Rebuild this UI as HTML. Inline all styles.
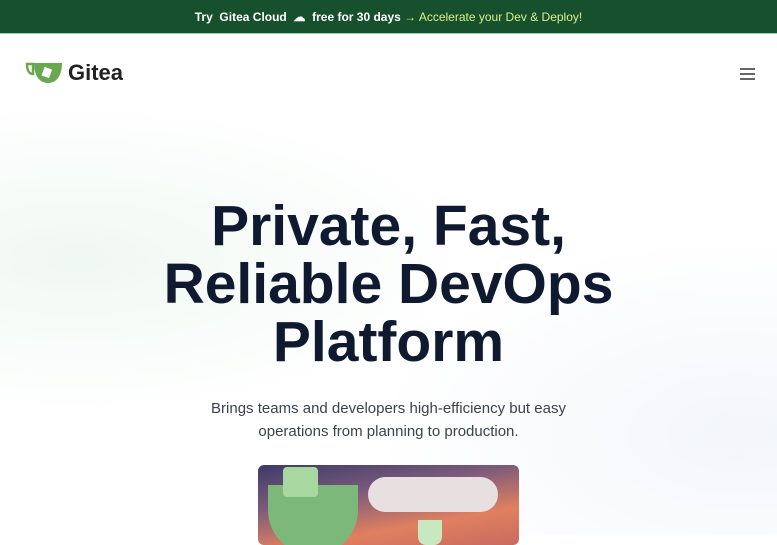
<!DOCTYPE html><html><head><style>
body{margin:0;width:777px;height:534px;overflow:hidden;font-family:"Liberation Sans",sans-serif;background:#fff;position:relative}
.bar{height:34px;background:#17502c;color:#fff;font-size:12px;font-weight:bold;text-align:center;line-height:34px;border-bottom:1px solid #9fd2b0;box-sizing:border-box}
.bar span{color:#d9f08a;font-weight:normal}
.bg{position:absolute;top:34px;left:0;right:0;bottom:0;background:radial-gradient(ellipse at 10% 45%,#f0f8f3 0,rgba(255,255,255,0) 40%),radial-gradient(ellipse at 95% 80%,#f3f6fa 0,rgba(255,255,255,0) 35%),#fff}
.logo{position:absolute;left:25px;top:60px;display:flex;align-items:center;font-size:22px;font-weight:bold;color:#222}
.menu{position:absolute;right:22px;top:68px;width:15px}
.menu i{display:block;height:2px;background:#666;margin-bottom:3px}
h1{position:absolute;top:197px;left:0;width:777px;margin:0;text-align:center;font-size:57px;line-height:58px;color:#0f1a30;font-weight:bold}
p{position:absolute;top:397px;left:0;width:777px;margin:0;text-align:center;font-size:15px;line-height:23px;color:#3a4150}
.img{position:absolute;left:258px;top:465px;width:261px;height:80px;border-radius:6px;background:linear-gradient(170deg,#3c3a6a 0%,#7a5a7a 35%,#e08060 70%,#c86a60 100%);overflow:hidden}
</style></head><body>
<div class="bar">Try &nbsp;Gitea Cloud &nbsp;☁ &nbsp;free for 30 days <span>→ Accelerate your Dev &amp; Deploy!</span></div>
<div class="bg"></div>
<div class="logo"><svg width="40" height="26" viewBox="0 0 40 26"><path d="M2 4h6v10c-4 0-6-4-6-10z" fill="none" stroke="#6aa84f" stroke-width="2.5"/><path d="M9 3h28c0 12-5 20-14 20s-14-8-14-20z" fill="#6aa84f"/><rect x="18" y="8" width="8" height="9" fill="#fff" transform="rotate(20 22 12)"/></svg><span style="margin-left:3px">Gitea</span></div>
<div class="menu"><i></i><i></i><i></i></div>
<h1>Private, Fast,<br>Reliable DevOps<br>Platform</h1>
<p>Brings teams and developers high-efficiency but easy<br>operations from planning to production.</p>
<div class="img">
<div style="position:absolute;left:10px;top:20px;width:90px;height:70px;border-radius:0 0 45px 45px;background:#7cb87a"></div>
<div style="position:absolute;left:25px;top:2px;width:35px;height:30px;background:#a8d8a0;border-radius:4px"></div>
<div style="position:absolute;left:110px;top:12px;width:130px;height:35px;border-radius:20px;background:#e8e0e0"></div>
<div style="position:absolute;left:160px;top:55px;width:24px;height:25px;background:#c8e8c0;border-radius:0 0 8px 8px"></div>
</div>
</body></html>
